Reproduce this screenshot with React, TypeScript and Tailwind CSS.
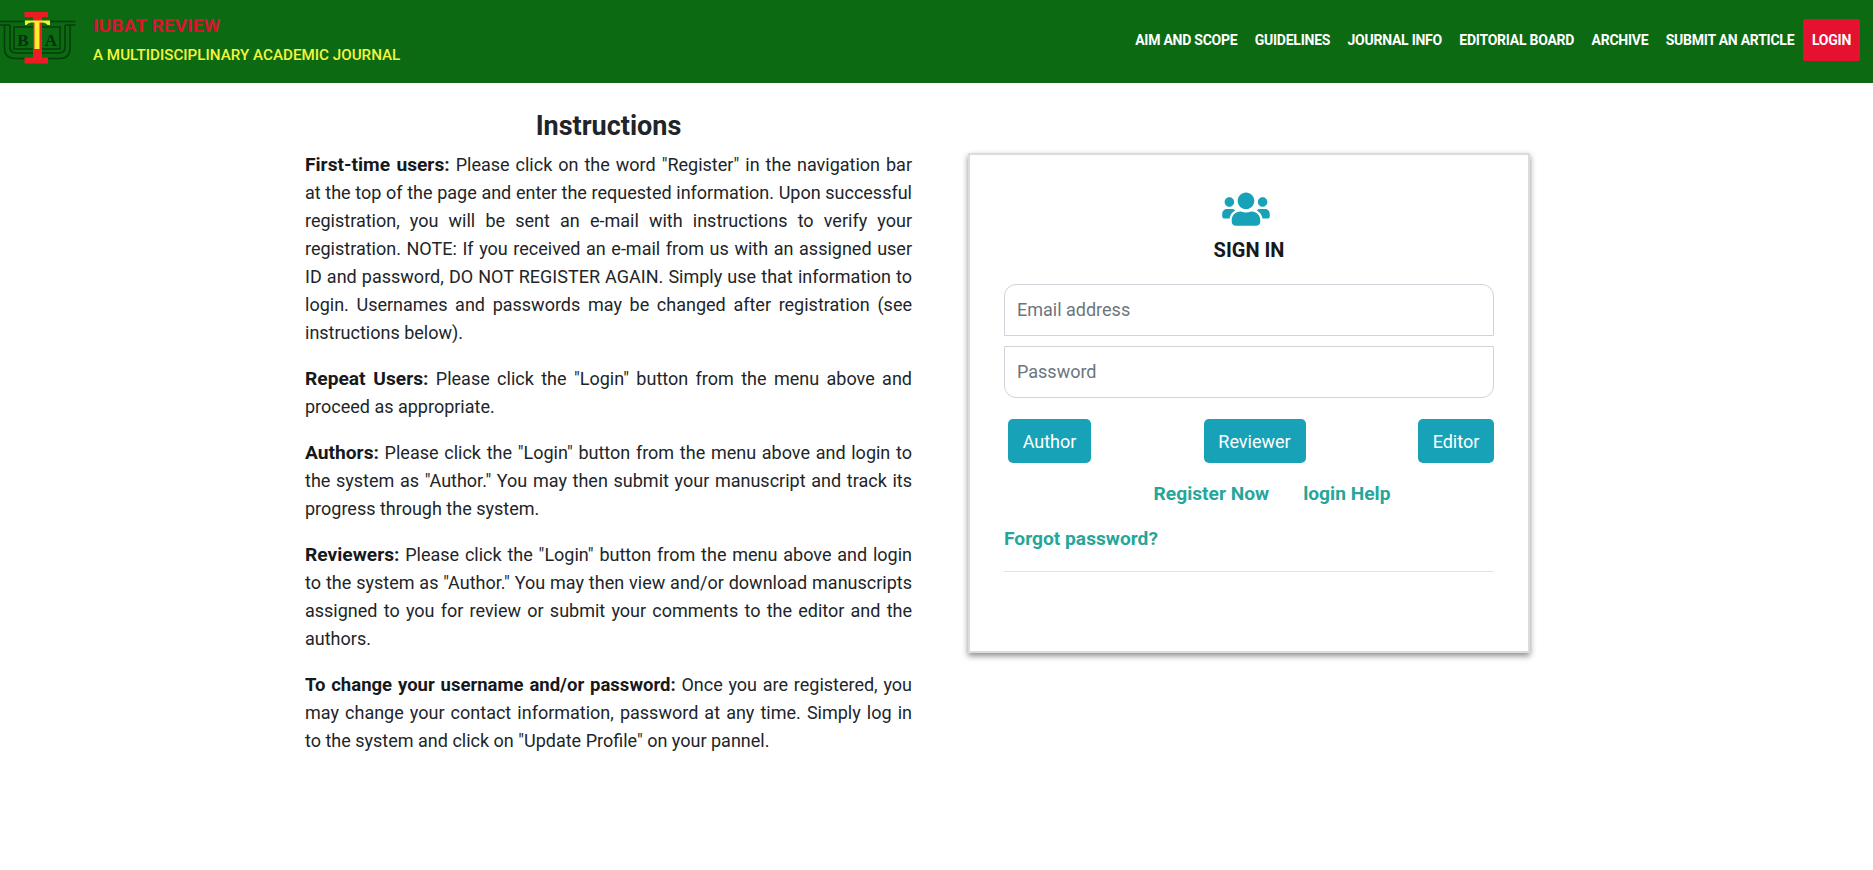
import { FaUsers } from "react-icons/fa";

const navItems = ["AIM AND SCOPE", "GUIDELINES", "JOURNAL INFO", "EDITORIAL BOARD", "ARCHIVE", "SUBMIT AN ARTICLE"];

function Logo() {
  return (
    <svg width="78" height="66" viewBox="0 0 78 66" className="shrink-0 self-start">
      {/* green U with serifs */}
      <g fill="none" stroke="#053f0c" strokeWidth="1.6">
        <path d="M0 21.5H24M50 21.5H75.5M0 25H10M65 25H75.5" />
        <path d="M4.5 25V48Q4.5 58.500 15 58.500H60Q70 58.500 70 48V25" />
        <path d="M10 25V47Q10 53 16 53H59Q65 53 65 47V25" />
        <path d="M14 27H60V49H14Z" />
      </g>
      <text x="23" y="46" textAnchor="middle" fontFamily="'Liberation Serif', serif" fontSize="17" fontWeight="700" fill="#06300c">B</text>
      <text x="51" y="46" textAnchor="middle" fontFamily="'Liberation Serif', serif" fontSize="17" fontWeight="700" fill="#06300c">A</text>
      {/* red I */}
      <path d="M24.500 12H48V17H42V57.500H48V63.500H24.500V57.500H33V17H24.500Z" fill="#ed1c24" />
      {/* yellow T */}
      <path d="M25 25V20.500H50V25H47.500Q46 22.500 42 22.500H39.500V49H34.500V22.500H31Q28 22.500 26.500 25Z" fill="#f4f32a" />
    </svg>
  );
}

function Bold({ children, className }: { children: React.ReactNode; className?: string }) {
  return <strong className={`font-bold text-[#16191c] ${className ?? "text-[19.2px]"}`}>{children}</strong>;
}

export default function App() {
  return (
    <div className="min-h-[870px] bg-white font-['Roboto',sans-serif] text-[#212529]">
      <header className="flex h-[83px] items-center justify-between bg-[#0c6a13] pr-[13px]">
        <div className="flex h-full items-center">
          <Logo />
          <div className="ml-[15px] pb-[3px]">
            <div className="text-[19.2px] leading-[26px] font-bold text-[#d9142f]">IUBAT REVIEW</div>
            <div className="mt-[3px] text-[15.2px] leading-[26px] font-medium text-[#f4f63c]">A MULTIDISCIPLINARY ACADEMIC JOURNAL</div>
          </div>
        </div>
        <nav className="flex items-center pb-[3px]">
          {navItems.map((item) => (
            <a key={item} className="px-[8.7px] text-[14px] font-bold tracking-[-0.25px] text-white">{item}</a>
          ))}
          <a className="flex h-[42px] w-[57px] items-center justify-center rounded-[2px] bg-[#e4112f] text-[14px] font-bold tracking-[-0.25px] text-white">LOGIN</a>
        </nav>
      </header>

      <main className="flex items-start pl-[305px]">
        <section className="w-[607px] pt-[28px] text-[18px] leading-[28px]">
          <h2 className="mb-[9px] text-center text-[27px] leading-[31px] font-bold">Instructions</h2>
          <p className="mb-[18px] text-justify"><Bold>First-time users:</Bold> Please click on the word "Register" in the navigation bar at the top of the page and enter the requested information. Upon successful registration, you will be sent an e-mail with instructions to verify your registration. NOTE: If you received an e-mail from us with an assigned user ID and password, DO NOT REGISTER AGAIN. Simply use that information to login. Usernames and passwords may be changed after registration (see instructions below).</p>
          <p className="mb-[18px] text-justify"><Bold>Repeat Users:</Bold> Please click the "Login" button from the menu above and proceed as appropriate.</p>
          <p className="mb-[18px] text-justify"><Bold>Authors:</Bold> Please click the "Login" button from the menu above and login to the system as "Author." You may then submit your manuscript and track its progress through the system.</p>
          <p className="mb-[18px] text-justify"><Bold>Reviewers:</Bold> Please click the "Login" button from the menu above and login to the system as "Author." You may then view and/or download manuscripts assigned to you for review or submit your comments to the editor and the authors.</p>
          <p className="text-justify"><Bold className="text-[18.5px]">To change your username and/or password:</Bold> Once you are registered, you may change your contact information, password at any time. Simply log in to the system and click on "Update Profile" on your pannel.</p>
        </section>

        <section className="mt-[70px] ml-[56px] h-[500px] w-[562px] border-2 border-[#dcdcdc] bg-white px-[34px] pt-[35px] shadow-[0_3px_6px_rgba(0,0,0,0.45)]">
          <div className="flex flex-col items-center">
            <FaUsers className="mr-[7px] h-[38px] w-[50px] text-[#17a2b8]" />
            <h3 className="mt-[9px] text-[20px] leading-[27px] font-bold text-[#16191c]">SIGN IN</h3>
          </div>
          <input placeholder="Email address" className="mt-[20px] block h-[52px] w-full rounded-t-[12px] border border-[#ced4da] px-[12px] pb-[2px] text-[18px] outline-none placeholder:text-[#6c757d]" />
          <input type="password" placeholder="Password" className="mt-[10px] block h-[52px] w-full rounded-b-[12px] border border-[#ced4da] px-[12px] pb-[2px] text-[18px] outline-none placeholder:text-[#6c757d]" />
          <div className="mt-[21px] flex justify-between pl-[4px]">
            <button className="h-[44px] w-[83px] rounded-[5px] bg-[#17a2b8] text-[18px] text-white">Author</button>
            <button className="h-[44px] w-[102px] rounded-[5px] bg-[#17a2b8] text-[18px] text-white">Reviewer</button>
            <button className="h-[44px] w-[76px] rounded-[5px] bg-[#17a2b8] text-[18px] text-white">Editor</button>
          </div>
          <div className="mt-[17px] flex justify-center gap-[34px] pl-[46px] text-[19.2px] leading-[27px] font-bold text-[#26a69a]">
            <a>Register Now</a>
            <a>login Help</a>
          </div>
          <a className="mt-[18px] block text-[19.2px] leading-[27px] font-bold text-[#26a69a]">Forgot password?</a>
          <hr className="mt-[19px] border-t border-[#e3e3e3]" />
        </section>
      </main>
    </div>
  );
}
